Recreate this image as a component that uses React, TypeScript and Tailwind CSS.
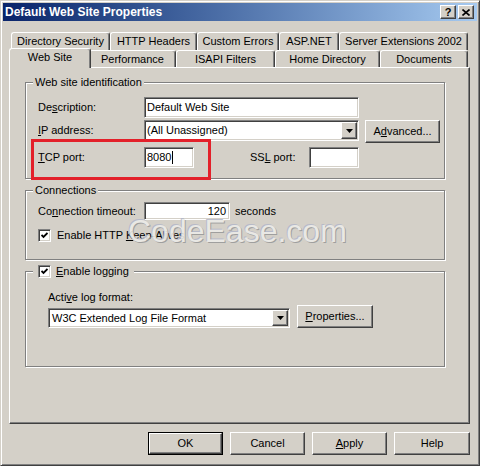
import React from "react";

const F = "font-['Liberation_Sans',Arial,sans-serif]";
const sunken =
  "bg-white border border-t-[#808080] border-l-[#808080] border-b-white border-r-white shadow-[inset_1px_1px_0_#404040,inset_-1px_-1px_0_#d4d0c8]";
const raised =
  "bg-[#d4d0c8] border border-t-white border-l-white border-b-[#404040] border-r-[#404040] shadow-[inset_-1px_-1px_0_#808080]";
const etched = "border border-[#808080] shadow-[inset_1px_1px_0_#ffffff,1px_1px_0_#ffffff]";
const tabBase =
  "bg-[#d4d0c8] border-l border-t border-r border-l-white border-t-white border-r-[#404040] rounded-t-[3px] shadow-[inset_-1px_0_0_#808080] flex items-center justify-center whitespace-nowrap";

function Check() {
  return (
    <div className={`w-[13px] h-[13px] ${sunken} flex items-center justify-center shrink-0`}>
      <svg width="7" height="7" viewBox="0 0 7 7">
        <polyline points="0.5,3 2.5,5 6.5,1" fill="none" stroke="#000" strokeWidth="1.8" />
      </svg>
    </div>
  );
}

function DropBtn() {
  return (
    <div className={`w-[16px] h-full ${raised} flex items-center justify-center shrink-0`}>
      <svg width="7" height="4" viewBox="0 0 7 4">
        <polygon points="0,0 7,0 3.5,4" fill="#000" />
      </svg>
    </div>
  );
}

const row1 = [
  { l: "Directory Security", w: "w-[99px]" },
  { l: "HTTP Headers", w: "w-[87px]" },
  { l: "Custom Errors", w: "w-[82px]" },
  { l: "ASP.NET", w: "w-[60px]" },
  { l: "Server Extensions 2002", w: "w-[129px]" },
];
const row2 = [
  { l: "Performance", w: "w-[87px]" },
  { l: "ISAPI Filters", w: "w-[99px]" },
  { l: "Home Directory", w: "w-[105px]" },
  { l: "Documents", w: "w-[88px]" },
];

export default function App() {
  return (
    <div className={`relative w-[484px] h-[469px] bg-white ${F} text-[11px] text-black leading-[13px]`}>
      <div className="w-[480px] h-[466px] bg-[#d4d0c8] border border-t-[#d4d0c8] border-l-[#d4d0c8] border-r-[#404040] border-b-[#404040] shadow-[inset_1px_1px_0_#ffffff,inset_-1px_-1px_0_#808080] p-[2px] flex flex-col">
        {/* title bar */}
        <div className="h-[18px] flex items-center pl-[2px] pr-[3px] bg-gradient-to-r from-[#0a246a] to-[#a6caf0]">
          <span className="text-white font-bold text-[12px] leading-[14px]">Default Web Site Properties</span>
          <div className="ml-auto flex gap-[2px]">
            <div className={`w-[16px] h-[14px] ${raised} flex items-center justify-center font-bold text-[11px] leading-[11px]`}>?</div>
            <div className={`w-[16px] h-[14px] ${raised} flex items-center justify-center`}>
              <svg width="8" height="7" viewBox="0 0 8 7">
                <path d="M0.5 0.5 L7.5 6.5 M7.5 0.5 L0.5 6.5" stroke="#000" strokeWidth="1.6" />
              </svg>
            </div>
          </div>
        </div>

        {/* content */}
        <div className="flex flex-col pl-[6px] pr-[7px] mt-[9px]">
          {/* tab row 1 */}
          <div className="flex h-[20px] pt-[2px] px-[2px]">
            {row1.map((t) => (
              <div key={t.l} className={`${tabBase} ${t.w} h-[18px]`}>{t.l}</div>
            ))}
          </div>
          {/* tab row 2 */}
          <div className="flex items-end h-[17px] px-[2px]">
            <div className={`${tabBase} relative z-10 w-[82px] h-[20px] -ml-[2px] -mr-[2px] -mb-[1px] pb-[2px]`}>Web Site</div>
            {row2.map((t) => (
              <div key={t.l} className={`${tabBase} ${t.w} h-[17px] pt-[1px]`}>{t.l}</div>
            ))}
          </div>

          {/* panel */}
          <div className="h-[357px] border border-t-white border-l-white border-r-[#404040] border-b-[#404040] shadow-[inset_-1px_-1px_0_#808080] pt-[14px] pl-[15px] flex flex-col">
            {/* group 1 */}
            <div className={`relative w-[420px] h-[97px] ${etched} pt-[14px] pl-[12px]`}>
              <span className="absolute left-[7px] -top-[7px] px-[2px] bg-[#d4d0c8]">Web site identification</span>
              <div className="flex items-center h-[21px]">
                <span className="w-[106px]">De<u>s</u>cription:</span>
                <div className={`w-[215px] h-[21px] ${sunken} flex items-center pl-[2px]`}>Default Web Site</div>
              </div>
              <div className="flex items-start h-[23px] mt-[2px]">
                <span className="w-[106px] leading-[21px]"><u>I</u>P address:</span>
                <div className={`w-[215px] h-[21px] ${sunken} flex items-center pl-[2px] pr-[1px] py-[1px]`}>
                  <span className="flex-1">(All Unassigned)</span>
                  <DropBtn />
                </div>
                <div className={`ml-[6px] w-[75px] h-[23px] ${raised} flex items-center justify-center`}>
                  A<u>d</u>vanced...
                </div>
              </div>
              <div className="flex items-center h-[21px] mt-[4px]">
                <span className="w-[106px]"><u>T</u>CP port:</span>
                <div className={`w-[50px] h-[21px] ${sunken} flex items-center pl-[2px]`}>
                  8080<span className="inline-block w-[1px] h-[13px] bg-black ml-[1px]" />
                </div>
                <span className="ml-[56px] w-[59px]">SS<u>L</u> port:</span>
                <div className={`w-[50px] h-[21px] ${sunken}`} />
              </div>
            </div>

            {/* group 2 */}
            <div className={`relative w-[420px] h-[70px] mt-[11px] ${etched} pt-[11px] pl-[12px]`}>
              <span className="absolute left-[7px] -top-[7px] px-[2px] bg-[#d4d0c8]">Connections</span>
              <div className="flex items-center h-[18px]">
                <span className="w-[106px]">Co<u>n</u>nection timeout:</span>
                <div className={`w-[86px] h-[18px] ${sunken} flex items-center justify-end pr-[3px]`}>120</div>
                <span className="ml-[5px]">seconds</span>
              </div>
              <div className="flex items-center h-[13px] mt-[9px]">
                <Check />
                <span className="ml-[6px]">Enable HTTP <u>K</u>eep-Alives</span>
              </div>
            </div>

            {/* group 3 */}
            <div className={`relative w-[420px] h-[96px] mt-[11px] ${etched} pt-[19px] pl-[22px]`}>
              <div className="absolute left-[7px] -top-[7px] px-[5px] h-[13px] bg-[#d4d0c8] flex items-center">
                <Check />
                <span className="ml-[5px]"><u>E</u>nable logging</span>
              </div>
              <div>Acti<u>v</u>e log format:</div>
              <div className="flex items-end h-[23px] mt-[1px]">
                <div className={`w-[242px] h-[20px] ${sunken} flex items-center pl-[3px] pr-[1px] py-[1px]`}>
                  <span className="flex-1">W3C Extended Log File Format</span>
                  <DropBtn />
                </div>
                <div className={`ml-[7px] w-[76px] h-[23px] ${raised} flex items-center justify-center`}>
                  <u>P</u>roperties...
                </div>
              </div>
            </div>
          </div>

          {/* buttons */}
          <div className="flex justify-end gap-[7px] mt-[8px] h-[23px]">
            <div className="w-[75px] h-[23px] border border-black">
              <div className={`w-full h-full ${raised} flex items-center justify-center`}>OK</div>
            </div>
            <div className={`w-[75px] h-[23px] ${raised} flex items-center justify-center`}>Cancel</div>
            <div className={`w-[75px] h-[23px] ${raised} flex items-center justify-center`}>
              <u>A</u>pply
            </div>
            <div className={`w-[76px] h-[23px] ${raised} flex items-center justify-center`}>Help</div>
          </div>
        </div>
      </div>

      {/* red annotation rectangle */}
      <div className="absolute left-[31px] top-[139px] w-[180px] h-[41px] border-[3px] border-[#e3202a]" />

      {/* watermark */}
      <div className="absolute left-[128px] top-[215px] text-[32px] leading-[32px] text-[#ecebe8] opacity-90 [text-shadow:1px_1px_0_#9a9a9a,-1px_-1px_0_#b4b8c8]">
        CodeEase.com
      </div>
    </div>
  );
}
